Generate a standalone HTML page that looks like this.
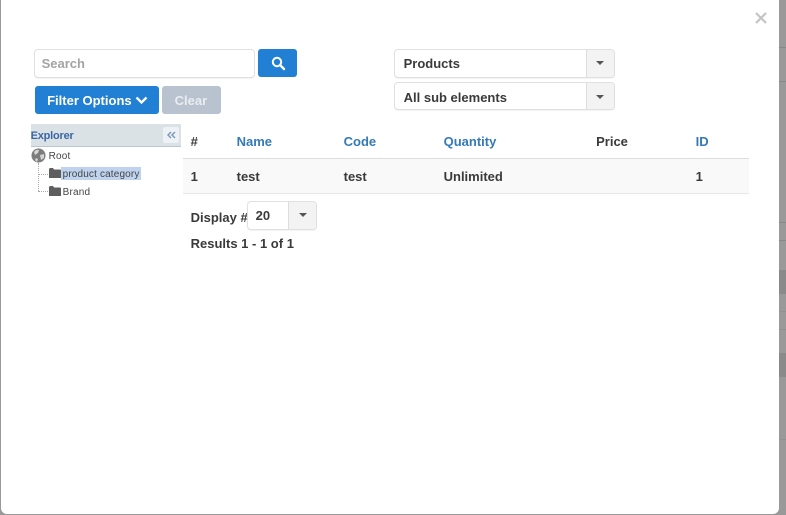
<!DOCTYPE html>
<html>
<head>
<meta charset="utf-8">
<style>
html,body{margin:0;padding:0;width:786px;height:515px;overflow:hidden;background:#999;font-family:"Liberation Sans",sans-serif;color:#333}
.abs,.t{position:absolute}
.t{font-size:13px;font-weight:bold;white-space:nowrap;line-height:16px;color:#3a3a3a;filter:blur(.3px);margin-left:-.4px}
.l{color:#337ab7}
.modal{position:absolute;left:1px;top:-6px;width:778px;height:520px;background:#fff;border-radius:6px}
.line{position:absolute;left:779px;width:7px;height:1px;background:#888}
.dark{position:absolute;left:779px;width:7px;background:#8a8a8a}
.inp{position:absolute;box-sizing:border-box;background:#fff;border:1px solid #e0e0e0;border-radius:4px;box-shadow:0 1px 1px rgba(0,0,0,.05)}
.arrow{position:absolute;width:0;height:0;border-left:4px solid transparent;border-right:4px solid transparent;border-top:4px solid #555}
.dd{position:absolute;box-sizing:border-box;top:0;right:0;bottom:0;background:#f3f3f3;border-left:1px solid #ddd;border-radius:0 3px 3px 0}
.btn{position:absolute;box-sizing:border-box;border-radius:3px}
</style>
</head>
<body>
<div class="line" style="top:47px"></div>
<div class="line" style="top:81px"></div>
<div class="line" style="top:222px"></div>
<div class="line" style="top:240px"></div>
<div class="dark" style="top:270px;height:24px"></div>
<div class="line" style="top:311px;background:#909090"></div>
<div class="line" style="top:329px;background:#909090"></div>
<div class="dark" style="top:353px;height:24px"></div>
<div class="line" style="top:439px;background:#909090"></div>
<div class="modal"></div>

<svg class="abs" style="left:755px;top:12px" width="12" height="12" viewBox="0 0 12 12"><path d="M1 1L11 11M11 1L1 11" stroke="#c4c4c4" stroke-width="2.2" fill="none"/></svg>

<div class="inp" style="left:34px;top:49px;width:221px;height:29px"></div>
<div class="t" style="left:42px;top:56px;color:#a3a3a3">Search</div>
<div class="btn" style="left:258px;top:49px;width:39px;height:28px;background:#2180d4"></div>
<svg class="abs" style="left:271px;top:56px" width="15" height="15" viewBox="0 0 15 15"><circle cx="6" cy="6" r="4.200" stroke="#fff" stroke-width="2" fill="none"/><path d="M9.300 9.300L13 13" stroke="#fff" stroke-width="2.400" stroke-linecap="round"/></svg>

<div class="btn" style="left:35px;top:86px;width:124px;height:28px;background:#2180d4"></div>
<div class="t" style="left:47.500px;top:93px;color:#fff">Filter Options</div>
<svg class="abs" style="left:135px;top:96px" width="13" height="9" viewBox="0 0 13 9"><path d="M1.500 1.500L6.500 6.500L11.500 1.500" stroke="#fff" stroke-width="2.300" fill="none"/></svg>
<div class="btn" style="left:162px;top:86px;width:59px;height:28px;background:#b9c2cf"></div>
<div class="t" style="left:175px;top:93px;color:#e9edf2">Clear</div>

<div class="inp" style="left:394px;top:49px;width:221px;height:29px"><div class="dd" style="width:28px"></div></div>
<div class="t" style="left:404px;top:56px">Products</div>
<div class="arrow" style="left:596px;top:61px"></div>
<div class="inp" style="left:394px;top:82px;width:221px;height:28px"><div class="dd" style="width:28px"></div></div>
<div class="t" style="left:404px;top:90px">All sub elements</div>
<div class="arrow" style="left:596px;top:95px"></div>

<div class="abs" style="left:31px;top:124px;width:150px;height:23px;background:#dbe2e6;border-bottom:1px solid #b9c6d3;box-sizing:border-box"></div>
<div class="t" style="left:31px;top:128px;font-size:11px;color:#3a66a5;letter-spacing:-.2px">Explorer</div>
<div class="abs" style="left:163px;top:127px;width:16px;height:16px;background:#eef2f6;border-radius:2px"></div>
<svg class="abs" style="left:167px;top:131px" width="9" height="8" viewBox="0 0 9 8"><path d="M4 1L1 4L4 7M8 1L5 4L8 7" stroke="#7d99bb" stroke-width="1.500" fill="none"/></svg>

<svg class="abs" style="left:31px;top:148px" width="16" height="15" viewBox="0 0 16 15"><circle cx="7.500" cy="7.500" r="7" fill="#7c7c7c"/><path d="M3 4Q5 1 8 2L7 5L4 7ZM9 7L13 6L13 10L10 12ZM5 10L7 11L6 14L4 12Z" fill="#d6d6d6"/></svg>
<div class="t" style="left:49px;top:149px;font-size:10px;font-weight:normal;letter-spacing:.2px;color:#444">Root</div>
<div class="abs" style="left:38px;top:163px;height:28px;width:0;border-left:1px dotted #aaa"></div>
<div class="abs" style="left:38px;top:174px;width:10px;border-top:1px dotted #aaa"></div>
<div class="abs" style="left:38px;top:191px;width:10px;border-top:1px dotted #aaa"></div>
<div class="abs" style="left:61px;top:167px;width:80px;height:13px;background:#bfd3ee"></div>
<svg class="abs" style="left:48px;top:167px" width="14" height="12" viewBox="0 0 14 12"><path d="M1 2.500Q1 1 2.500 1L5 1L6 2.500L12 2.500Q13 2.500 13 3.500L13 11L1 11Z" fill="#5e5e5e"/></svg>
<div class="t" style="left:63px;top:167px;font-size:10px;font-weight:normal;letter-spacing:.15px;color:#444">product category</div>
<svg class="abs" style="left:48px;top:185px" width="14" height="12" viewBox="0 0 14 12"><path d="M1 2.500Q1 1 2.500 1L5 1L6 2.500L12 2.500Q13 2.500 13 3.500L13 11L1 11Z" fill="#5e5e5e"/></svg>
<div class="t" style="left:63px;top:185px;font-size:10px;font-weight:normal;letter-spacing:.2px;color:#444">Brand</div>

<div class="t" style="left:191px;top:134px">#</div>
<div class="t l" style="left:237px;top:134px">Name</div>
<div class="t l" style="left:344px;top:134px">Code</div>
<div class="t l" style="left:444px;top:134px">Quantity</div>
<div class="t" style="left:596.500px;top:134px">Price</div>
<div class="t l" style="left:696px;top:134px">ID</div>
<div class="abs" style="left:183px;top:158px;width:566px;height:36px;box-sizing:border-box;background:#f9f9f9;border-top:1px solid #ddd;border-bottom:1px solid #e8e8e8"></div>
<div class="t" style="left:191px;top:169px">1</div>
<div class="t" style="left:237px;top:169px">test</div>
<div class="t" style="left:344px;top:169px">test</div>
<div class="t" style="left:444px;top:169px">Unlimited</div>
<div class="t" style="left:696px;top:169px">1</div>

<div class="t" style="left:191px;top:210px">Display #</div>
<div class="inp" style="left:247px;top:201px;width:70px;height:29px"><div class="dd" style="width:28px"></div></div>
<div class="t" style="left:256px;top:208px">20</div>
<div class="arrow" style="left:299px;top:213px"></div>
<div class="t" style="left:191px;top:236px">Results 1 - 1 of 1</div>
</body>
</html>
